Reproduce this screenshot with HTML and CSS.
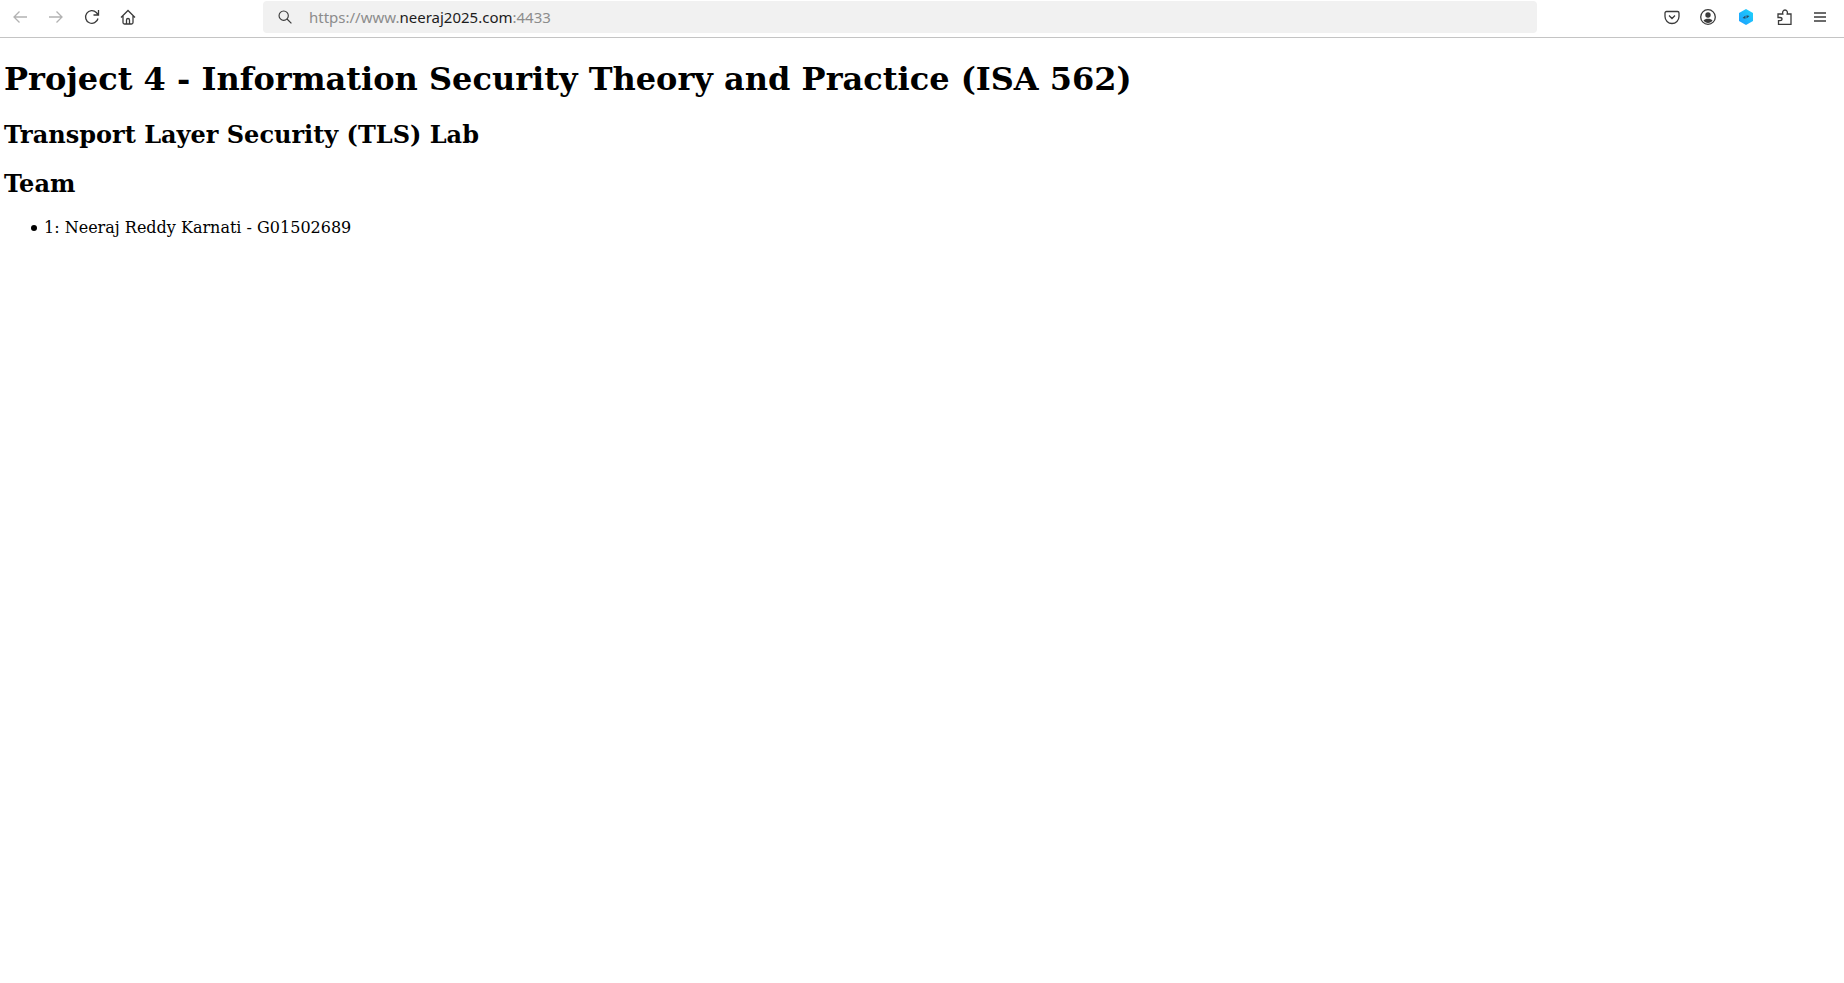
FILE: index.html
```html
<!DOCTYPE html>
<html lang="en">
<head>
    <meta charset="UTF-8">
    <meta name="viewport" content="width=device-width, initial-scale=1.0">
    <title>Project 4</title>
    <link rel="stylesheet" href="styles.css">
</head>
<body>
    <div class="toolbar">
        <div class="nav-buttons">
            <svg class="icon dim" viewBox="0 0 16 16"><path d="M15 8H2M7.500 2.500 2 8l5.500 5.500"/></svg>
            <svg class="icon dim" viewBox="0 0 16 16"><path d="M1 8H14M8.500 2.500 14 8l-5.500 5.500"/></svg>
            <svg class="icon" viewBox="0 0 16 16"><path d="M14 9.500A6.300 6.300 0 1 1 12.300 3.500L14 5.500M14.500 1v5H9.500"/></svg>
            <svg class="icon" viewBox="0 0 16 16"><path d="M1 8.500 8 1.500 15 8.500M3 6.500v7a1.500 1.500 0 0 0 1.500 1.500h7a1.500 1.500 0 0 0 1.500-1.500v-7M6.500 15V11a1.500 1.500 0 0 1 3 0v4"/></svg>
        </div>
        <div class="urlbar">
            <svg class="icon search" viewBox="0 0 16 16"><circle cx="6.500" cy="6.500" r="5.300"/><path d="m10.300 10.300 5 5"/></svg>
            <span class="url">https://www.<span class="host">neeraj2025.com</span>:4433</span>
        </div>
        <div class="tools">
            <svg class="icon" viewBox="0 0 16 16"><path d="M2.500 2.500h11A1.500 1.500 0 0 1 15 4v3.500a7 7 0 0 1-14 0V4a1.500 1.500 0 0 1 1.500-1.500zM5 6.500l3 3 3-3"/></svg>
            <svg class="icon" viewBox="0 0 16 16"><circle cx="8" cy="8" r="7.300"/><circle class="solid" cx="8" cy="6" r="2.700"/><path class="solid" d="M3.500 11.500c1-1.300 2.500-1.800 4.500-1.800s3.500.5 4.500 1.800C11.500 13 10 14 8 14s-3.500-1-4.500-2.500z"/></svg>
            <svg class="icon ext" viewBox="0 0 16 16">
                <defs><linearGradient id="hexfill" x1="0" y1="1" x2="1" y2="0"><stop offset="0" stop-color="#1c9cff"/><stop offset="1" stop-color="#1fd6fb"/></linearGradient></defs>
                <path fill="url(#hexfill)" stroke="none" d="M8 0 15 4v8l-7 4-7-4V4z"/>
                <path class="mark" d="M4.500 9 7.500 6.500v3.300zM11.500 7 8.500 9.500V6.200z"/>
            </svg>
            <svg class="icon" viewBox="0 0 16 16"><path d="M2 5H6.800C6.300 3 7 1 9 1s2.800 2 2.200 4H15v10.300H2.500V11.700H4c1.500 0 2-.9 2-1.600S5.500 8.500 4 8.500H2z"/></svg>
            <svg class="icon" viewBox="0 0 16 16"><path d="M2 4h12M2 8h12M2 12h12"/></svg>
        </div>
    </div>
    <div class="page">
        <h1>Project 4 - Information Security Theory and Practice (ISA 562)</h1>
        <h2>Transport Layer Security (TLS) Lab</h2>
        <h2>Team</h2>
        <ul>
            <li>1: Neeraj Reddy Karnati - G01502689</li>
        </ul>
    </div>
</body>
</html>
```

FILE: styles.css
```css
html, body {
    margin: 0;
    background: #fff;
}

.toolbar {
    display: flex;
    align-items: center;
    height: 34px;
    padding-bottom: 3px;
    border-bottom: 1px solid #c4c4c4;
    font-family: "Noto Sans", sans-serif;
}

.icon {
    width: 16px;
    height: 16px;
    flex: none;
    fill: none;
    stroke: #3b3b3b;
    stroke-width: 1.3;
}
.icon.dim {
    stroke: #b2b2b2;
}
.icon .solid {
    fill: #3b3b3b;
    stroke: none;
}
.icon .mark {
    fill: #2a4a63;
    stroke: none;
}

.nav-buttons {
    display: flex;
    gap: 20px;
    width: 263px;
    padding-left: 12px;
    box-sizing: border-box;
    flex: none;
}

.urlbar {
    display: flex;
    align-items: center;
    width: 1274px;
    height: 32px;
    background: #f1f1f1;
    border-radius: 4px;
    flex: none;
}
.search {
    width: 14px;
    height: 14px;
    margin-left: 15px;
}
.url {
    margin-left: 17px;
    font-size: 15px;
    color: #8c8c8c;
}
.host {
    color: #1c1c1c;
}

.tools {
    display: flex;
    gap: 20px;
    margin-left: 127px;
}
.ext {
    margin: 0 2px;
}

.page {
    padding: 0 4px;
    color: #000;
    font-family: "DejaVu Serif", serif;
}
h1 {
    margin: 22px 0 0;
    font-size: 32px;
}
h2 {
    margin: 22px 0 0;
    font-size: 24px;
}
h2 + h2 {
    margin-top: 20px;
}
ul {
    margin: 20px 0 0;
    padding-left: 40px;
    font-size: 16px;
    list-style: none;
}
li::before {
    content: "";
    display: inline-block;
    width: 6px;
    height: 6px;
    margin-left: -13px;
    margin-right: 7px;
    border-radius: 50%;
    background: #000;
    vertical-align: 2px;
}
```
